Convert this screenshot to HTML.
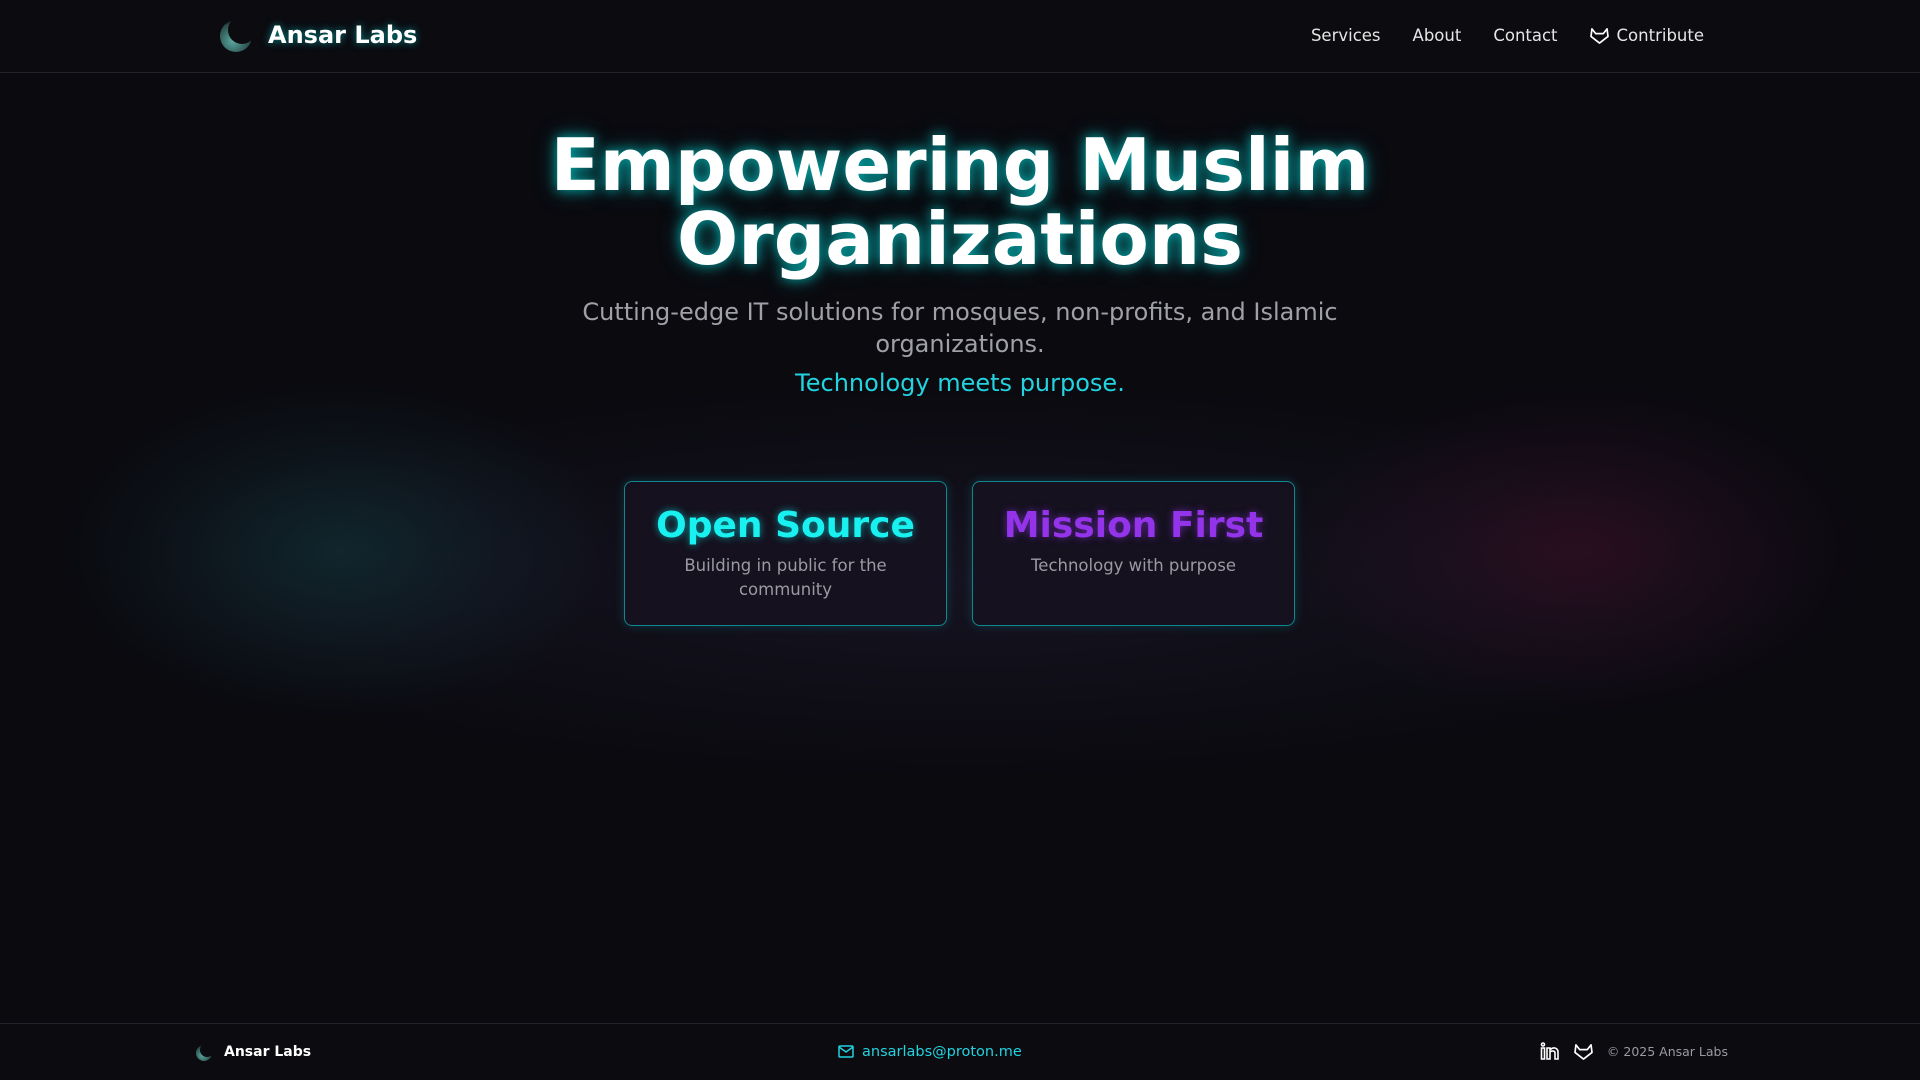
<!DOCTYPE html>
<html><head><meta charset="utf-8"><style>
*{margin:0;padding:0;box-sizing:border-box}
body{width:1920px;height:1080px;background:#0a0a0f;font-family:"DejaVu Sans","Liberation Sans",sans-serif;color:#fff;position:relative;overflow:hidden}
.glow1{position:absolute;left:60px;top:380px;width:560px;height:340px;border-radius:50%;background:radial-gradient(ellipse at center,rgba(25,95,100,.3) 0%,rgba(25,70,85,.16) 40%,rgba(10,10,15,0) 70%)}
.glow2{position:absolute;left:1290px;top:380px;width:580px;height:340px;border-radius:50%;background:radial-gradient(ellipse at center,rgba(105,20,60,.3) 0%,rgba(75,20,60,.16) 40%,rgba(10,10,15,0) 70%)}
.glowc{position:absolute;left:100px;top:380px;width:1720px;height:400px;border-radius:50%;background:radial-gradient(ellipse at center,rgba(30,25,45,.6) 0%,rgba(10,10,15,0) 70%)}
header{position:absolute;top:0;left:0;width:1920px;height:73px;border-bottom:1px solid #23232b;background:#0b0b10}
.logo{position:absolute;left:220px;top:20px;width:32px;height:32px;border-radius:50%;background:radial-gradient(circle at 40% 65%,#5aa8a0,#2a4a48 60%,#0b0b10 75%)}
.logo:after{content:"";position:absolute;left:8px;top:-4px;width:28px;height:28px;border-radius:50%;background:#0b0b10}
.brand{position:absolute;left:268px;top:21px;font-size:24px;font-weight:bold;text-shadow:0 0 8px rgba(0,220,220,.6)}
nav{position:absolute;top:26px;right:216px;font-size:16.5px;color:#e6e6e6;display:flex;gap:32px;align-items:center}
nav svg{vertical-align:-3px;margin-right:8px}
h1{position:absolute;top:128px;left:0;width:1920px;text-align:center;font-size:72px;line-height:74px;font-weight:bold;text-shadow:0 0 12px rgba(0,230,230,.7),0 0 24px rgba(0,200,200,.35)}
.sub{position:absolute;top:296px;left:560px;width:800px;text-align:center;font-size:24px;line-height:32px;color:#a0a0a8}
.tag{position:absolute;top:369px;left:0;width:1920px;text-align:center;font-size:24px;color:#22d3e0}
.card{position:absolute;top:481px;width:323px;height:145px;border:1.5px solid #0f8790;border-radius:8px;background:rgba(22,18,32,.85);text-align:center;box-shadow:0 0 10px rgba(0,180,190,.25)}
.card h2{margin-top:22px;font-size:36px;line-height:44px}
.card p{margin-top:6px;font-size:16.5px;line-height:24px;color:#9a9aa2;padding:0 30px}
footer{position:absolute;left:0;top:1023px;width:1920px;height:57px;border-top:1px solid #23232b;background:#0b0b10}
.flogo{position:absolute;left:196px;top:21px;width:16px;height:16px;border-radius:50%;background:radial-gradient(circle at 40% 65%,#5aa8a0,#2a4a48 60%,#0b0b10 75%)}
.flogo:after{content:"";position:absolute;left:4px;top:-2px;width:14px;height:14px;border-radius:50%;background:#0b0b10}
.fbrand{position:absolute;left:224px;top:20px;font-size:14px;font-weight:bold}
.mail{position:absolute;left:838px;top:20px;font-size:14.5px;color:#22d3e0}
.mail svg{vertical-align:-2px;margin-right:8px}
.fr{position:absolute;right:192px;top:18px;font-size:12.5px;color:#9a9aa2;display:flex;align-items:center;gap:14px}
</style></head><body>
<div class="glowc"></div><div class="glow1"></div><div class="glow2"></div>
<header><div class="logo"></div><div class="brand">Ansar Labs</div>
<nav><span>Services</span><span>About</span><span>Contact</span><span><svg width="19" height="17" viewBox="0 0 20 18" fill="none" stroke="#fff" stroke-width="1.8" stroke-linejoin="round"><path d="M2 2 L6 7 H14 L18 2 L19 10 L10 17 L1 10 Z"/></svg>Contribute</span></nav></header>
<h1>Empowering Muslim<br>Organizations</h1>
<div class="sub">Cutting-edge IT solutions for mosques, non-profits, and Islamic organizations.</div>
<div class="tag">Technology meets purpose.</div>
<div class="card" style="left:624px"><h2 style="color:#19f0f0;text-shadow:0 0 8px rgba(0,240,240,.6)">Open Source</h2><p>Building in public for the community</p></div>
<div class="card" style="left:972px"><h2 style="color:#9333ea;text-shadow:0 0 8px rgba(147,51,234,.6)">Mission First</h2><p>Technology with purpose</p></div>
<footer><div class="flogo"></div><div class="fbrand">Ansar Labs</div>
<div class="mail"><svg width="16" height="13" viewBox="0 0 16 13" fill="none" stroke="#22d3e0" stroke-width="1.5"><rect x="1" y="1" width="14" height="11" rx="1"/><path d="M1 2 L8 7 L15 2"/></svg>ansarlabs@proton.me</div>
<div class="fr"><svg width="20" height="18" viewBox="0 0 20 18" fill="none" stroke="#fff" stroke-width="1.6"><circle cx="3" cy="2.5" r="1.5"/><path d="M1.5 6 H4.5 V17 H1.5 Z M7 6 H10 V8 Q12 5.5 15 6 Q18 7 18 10 V17 H15 V11 Q15 9 13 9 Q10 9 10 11 V17 H7 Z"/></svg><svg width="19" height="17" viewBox="0 0 20 18" fill="none" stroke="#fff" stroke-width="1.8" stroke-linejoin="round"><path d="M2 2 L6 7 H14 L18 2 L19 10 L10 17 L1 10 Z"/></svg><span>© 2025 Ansar Labs</span></div></footer>
</body></html>
